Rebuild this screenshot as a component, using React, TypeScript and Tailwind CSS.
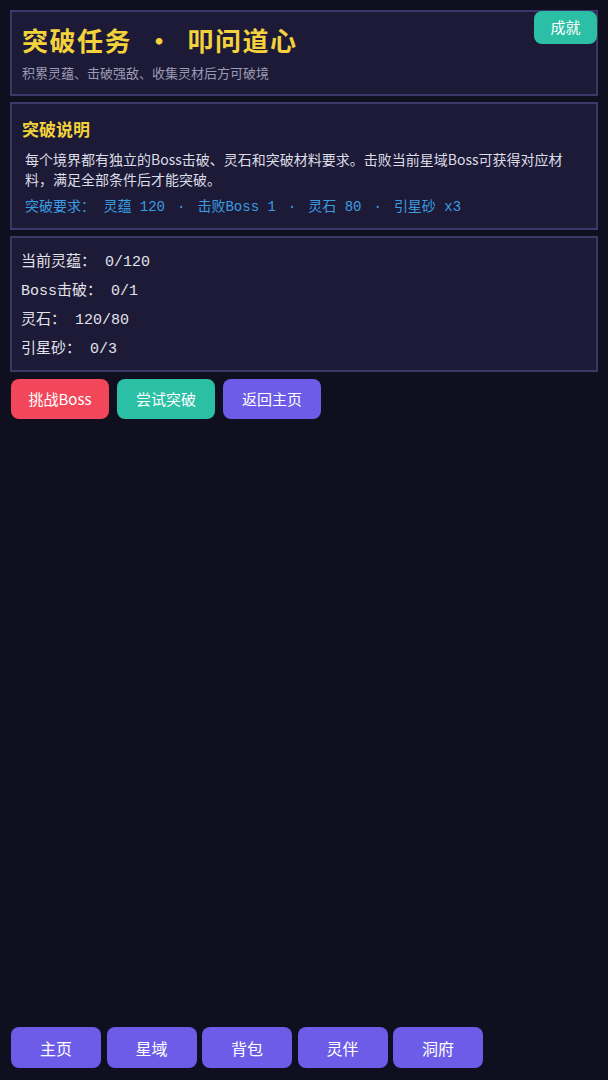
import React from "react";

const font = { fontFamily: '"Noto Sans CJK SC", "Noto Sans", sans-serif' };
const mono = { fontFamily: '"Liberation Mono", "Noto Sans CJK SC", monospace' };

function Dot() {
  return <span className="mx-[12px]">·</span>;
}

export default function App() {
  return (
    <div
      className="min-h-screen w-full bg-[#0f0f1f] flex flex-col px-[10px] pt-[10px] pb-[12px]"
      style={font}
    >
      <div className="flex flex-col gap-[6px]">
        <div className="relative border-2 border-[#3a3868] bg-[#1c1a36] px-[10px] pt-[12px] pb-[12px]">
          <div className="flex items-center text-[26px] leading-[31px] font-bold text-[#f3d23c] tracking-[1.5px]">
            <span>突破任务</span>
            <span className="mx-[14px]">·</span>
            <span>叩问道心</span>
          </div>
          <div className="mt-[9px] text-[13px] leading-[18px] text-[#9c9bb4]">
            积累灵蕴、击破强敌、收集灵材后方可破境
          </div>
          <button className="absolute top-[-1px] right-[-1px] w-[63px] h-[33px] rounded-[8px] bg-[#2bbfa6] text-white text-[15px]">
            成就
          </button>
        </div>

        <div className="border-2 border-[#3a3868] bg-[#1c1a36] px-[10px] pt-[14px] pb-[11px]">
          <div className="text-[17px] leading-[22px] font-bold text-[#f3d23c]">
            突破说明
          </div>
          <div className="mt-[9px] pl-[3px] pr-[16px] text-[14px] leading-[20px] text-[#dcdce6]">
            每个境界都有独立的Boss击破、灵石和突破材料要求。击败当前星域Boss可获得对应材料，满足全部条件后才能突破。
          </div>
          <div
            className="mt-[8px] pl-[3px] text-[14px] leading-[20px] text-[#3b9ce2] whitespace-pre"
            style={mono}
          >
            <span>{"突破要求： 灵蕴 120"}</span>
            <Dot />
            <span>{"击败Boss 1"}</span>
            <Dot />
            <span>{"灵石 80"}</span>
            <Dot />
            <span>{"引星砂 x3"}</span>
          </div>
        </div>

        <div
          className="border-2 border-[#3a3868] bg-[#1c1a36] px-[9px] pt-[10px] pb-[6px] text-[15px] leading-[29px] text-[#e2e2ea] whitespace-pre"
          style={mono}
        >
          <div>{"当前灵蕴： 0/120"}</div>
          <div>{"Boss击破： 0/1"}</div>
          <div>{"灵石： 120/80"}</div>
          <div>{"引星砂： 0/3"}</div>
        </div>
      </div>

      <div className="mt-[7px] flex gap-[8px] pl-[1px]">
        <button className="w-[98px] h-[40px] rounded-[8px] bg-[#f2475b] text-white text-[15px]">
          挑战Boss
        </button>
        <button className="w-[98px] h-[40px] rounded-[8px] bg-[#2bbfa6] text-white text-[15px]">
          尝试突破
        </button>
        <button className="w-[98px] h-[40px] rounded-[8px] bg-[#6c5ce7] text-white text-[15px]">
          返回主页
        </button>
      </div>

      <div className="mt-auto flex gap-[5.5px] pl-[1px]">
        {["主页", "星域", "背包", "灵伴", "洞府"].map((t) => (
          <button
            key={t}
            className="w-[90px] h-[41px] rounded-[8px] bg-[#6c5ce7] text-white text-[16px]"
          >
            {t}
          </button>
        ))}
      </div>
    </div>
  );
}
